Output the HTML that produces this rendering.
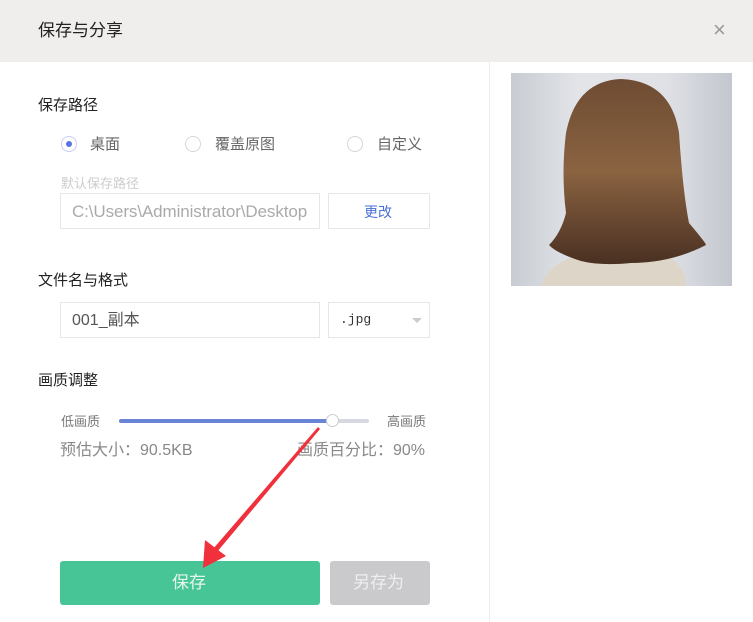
<!DOCTYPE html>
<html><head><meta charset="utf-8"><style>
*{margin:0;padding:0;box-sizing:border-box}
body{width:753px;height:622px;background:#fff;font-family:"Liberation Sans","Noto Sans CJK SC",sans-serif;position:relative;overflow:hidden;color:#333}
.a{position:absolute;line-height:1.2}
.hd{left:0;top:0;width:753px;height:62px;background:#f0eeed}
.t{font-size:17px;color:#222}
.lab{font-size:15px;color:#222}
.box{border:1px solid #e6e6e6;background:#fff}
.radio{width:16px;height:16px;border:1px solid #d6d6d6;border-radius:50%}
.g{color:#888;font-size:15px}
</style></head><body>
<div class="a hd"></div>
<div class="a t" style="left:38px;top:21px">保存与分享</div>
<div class="a" style="left:713px;top:17px;font-size:22px;color:#999">×</div>
<div class="a" style="left:489px;top:62px;width:1px;height:560px;background:#ececec"></div>

<div class="a lab" style="left:38px;top:97px">保存路径</div>
<div class="a radio" style="left:61px;top:136px;border-color:#c9cdf0"></div>
<div class="a" style="left:66px;top:141px;width:6px;height:6px;border-radius:50%;background:#5b72e0"></div>
<div class="a g" style="left:90px;top:136px;color:#666">桌面</div>
<div class="a radio" style="left:185px;top:136px"></div>
<div class="a g" style="left:215px;top:136px;color:#666">覆盖原图</div>
<div class="a radio" style="left:347px;top:136px"></div>
<div class="a g" style="left:377px;top:136px;color:#666">自定义</div>
<div class="a" style="left:61px;top:176px;font-size:13px;color:#ccc">默认保存路径</div>
<div class="a box" style="left:60px;top:193px;width:260px;height:36px"></div>
<div class="a" style="left:72px;top:202px;font-size:17px;color:#aaa;letter-spacing:-0.1px">C:\Users\Administrator\Desktop</div>
<div class="a box" style="left:328px;top:193px;width:102px;height:36px"></div>
<div class="a" style="left:364px;top:204px;font-size:14px;color:#4a6fd8">更改</div>

<div class="a lab" style="left:38px;top:272px">文件名与格式</div>
<div class="a box" style="left:60px;top:302px;width:260px;height:36px"></div>
<div class="a" style="left:72px;top:311px;font-size:16px;color:#555">001_副本</div>
<div class="a box" style="left:328px;top:302px;width:102px;height:36px"></div>
<div class="a" style="left:340px;top:312px;font-size:13px;color:#333;font-family:'Liberation Mono',monospace">.jpg</div>
<div class="a" style="left:412px;top:318px;width:0;height:0;border-left:5px solid transparent;border-right:5px solid transparent;border-top:5px solid #ccc"></div>

<div class="a lab" style="left:38px;top:372px">画质调整</div>
<div class="a" style="left:61px;top:414px;font-size:13px;color:#777">低画质</div>
<div class="a" style="left:119px;top:419px;width:214px;height:4px;background:#6a85d6;border-radius:2px"></div>
<div class="a" style="left:333px;top:419px;width:36px;height:4px;background:#d6d8e4;border-radius:2px"></div>
<div class="a" style="left:326px;top:414px;width:13px;height:13px;border-radius:50%;background:#fff;border:1px solid #ccc"></div>
<div class="a" style="left:387px;top:414px;font-size:13px;color:#777">高画质</div>
<div class="a" style="left:60px;top:441px;font-size:16px;color:#888">预估大小：90.5KB</div>
<div class="a" style="left:297px;top:441px;font-size:16px;color:#888">画质百分比：90%</div>

<div class="a" style="left:60px;top:561px;width:260px;height:44px;background:#47c596;border-radius:3px"></div>
<div class="a" style="left:172px;top:573px;font-size:17px;color:#e6f7ef">保存</div>
<div class="a" style="left:330px;top:561px;width:100px;height:44px;background:#cacacd;border-radius:3px"></div>
<div class="a" style="left:353px;top:573px;font-size:17px;color:#eee">另存为</div>

<svg class="a" style="left:0;top:0" width="753" height="622">
<polygon points="318,427 320,429 217,552 213,549" fill="#f0303a"/>
<polygon points="203,568 205,540 226,556" fill="#f0303a"/>
</svg>

<svg class="a" style="left:511px;top:73px" width="221" height="213">
<defs><linearGradient id="bg" x1="0" x2="1"><stop offset="0" stop-color="#c8ccd2"/><stop offset=".3" stop-color="#e2e4e8"/><stop offset=".7" stop-color="#dfe1e6"/><stop offset="1" stop-color="#c3c7ce"/></linearGradient>
<linearGradient id="h" x1="0" y1="0" x2="0" y2="1"><stop offset="0" stop-color="#6e4c33"/><stop offset=".5" stop-color="#8a6341"/><stop offset="1" stop-color="#4a3022"/></linearGradient></defs>
<rect width="221" height="213" fill="url(#bg)"/>
<path d="M30 213 Q40 185 80 180 L150 180 Q175 190 175 213Z" fill="#ddd6c8"/>
<path d="M110 6 Q160 8 168 60 Q172 120 178 150 Q195 170 195 172 Q160 190 120 190 Q90 193 70 188 Q45 180 38 172 Q50 160 55 140 Q50 100 55 60 Q65 8 110 6Z" fill="url(#h)"/>
</svg>
</body></html>
